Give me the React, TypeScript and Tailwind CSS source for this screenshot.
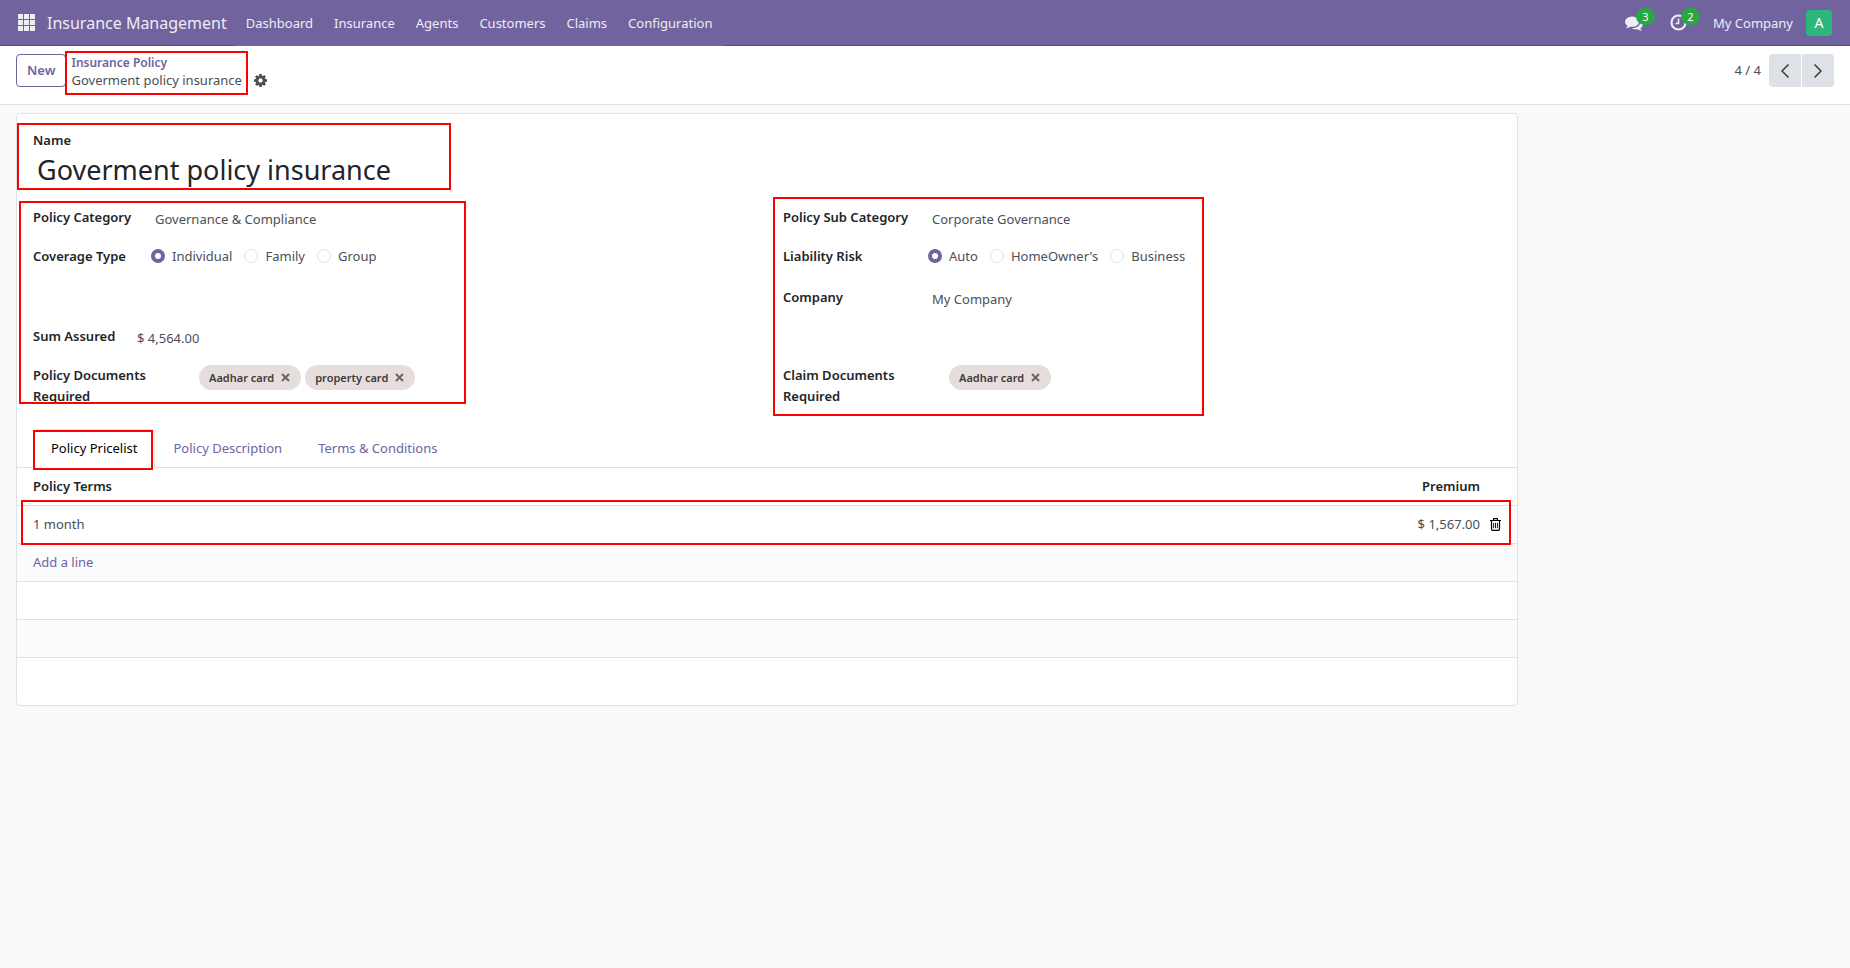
import React, { useState } from 'react';
import { clsx } from 'clsx';

const menuItems = ['Dashboard', 'Insurance', 'Agents', 'Customers', 'Claims', 'Configuration'];
const tabs = ['Policy Pricelist', 'Policy Description', 'Terms & Conditions'];

const labelClass = 'shrink-0 font-semibold leading-[21px] text-[#212529]';
const valueClass = 'h-[23px] min-w-0 flex-1 bg-transparent leading-[21px] outline-none';

function Highlight({ className }: { className: string }) {
  return <div aria-hidden="true" className={clsx('pointer-events-none absolute z-10 border-2 border-[#fe0000]', className)} />;
}

function AppsIcon() {
  return (
    <svg width="17" height="17" viewBox="0 0 17 17" fill="currentColor">
      {[0, 6, 12].map((y) => [0, 6, 12].map((x) => <rect key={`${x}-${y}`} x={x} y={y} width="5" height="5" />))}
    </svg>
  );
}

function ChatIcon() {
  return (
    <svg width="18" height="18" viewBox="0 0 1792 1792" fill="currentColor">
      <path d="M1408 768q0 139-94 257t-256.5 186.5-353.5 68.5q-86 0-176-16-124 88-278 128-36 9-86 16h-3q-11 0-20.5-8t-11.5-21q-1-3-1-6.5t.5-6.5 2-6l2.5-5 3.5-5.5 4-5 4.5-5 4-4.5q5-6 23-25t26-29.5 22.5-29 25-38.5 20.5-44q-124-72-195-177t-71-224q0-139 94-257t256.5-186.5 353.5-68.5 353.5 68.5 256.5 186.5 94 257zm384 256q0 120-71 224.5t-195 176.5q10 24 20.5 44t25 38.5 22.5 29 26 29.5 23 25q1 1 4 4.5t4.5 5 4 5 3.5 5.5l2.5 5 2 6 .5 6.5-1 6.5q-3 14-13 22t-22 7q-50-7-86-16-154-40-278-128-90 16-176 16-271 0-472-132 58 4 88 4 161 0 309-45t264-129q125-92 192-212t67-254q0-77-23-152 129 71 204 178t75 230z" />
    </svg>
  );
}

function ClockIcon() {
  return (
    <svg width="17" height="17" viewBox="0 0 17 17" fill="none" stroke="currentColor">
      <circle cx="8.5" cy="8.5" r="7" strokeWidth="2.2" />
      <path d="M8.5 4.5V9.5H5.5" strokeWidth="1.6" />
    </svg>
  );
}

function GearIcon() {
  return (
    <svg width="13" height="13" viewBox="128 128 1536 1536" fill="currentColor">
      <path d="M1152 896q0-106-75-181t-181-75-181 75-75 181 75 181 181 75 181-75 75-181zm512-109v222q0 12-8 23t-20 13l-185 28q-19 54-39 91 35 50 107 138 10 12 10 25t-9 23q-27 37-99 108t-94 71q-12 0-26-9l-138-108q-44 23-91 38-16 136-29 186-7 28-36 28h-222q-14 0-24.5-8.5t-11.5-21.5l-28-184q-49-16-90-37l-141 107q-10 9-25 9-14 0-25-11-126-114-165-168-7-10-7-23 0-12 8-23 15-21 51-66.5t54-70.5q-27-50-41-99l-183-27q-13-2-21-12.5t-8-23.5v-222q0-12 8-23t19-13l186-28q14-46 39-92-40-57-107-138-10-12-10-24 0-10 9-23 26-36 98.5-107.5t94.5-71.5q13 0 26 10l138 107q44-23 91-38 16-136 29-186 7-28 36-28h222q14 0 24.5 8.5t11.5 21.5l28 184q49 16 90 37l142-107q9-9 24-9 13 0 25 10 129 119 165 170 7 8 7 22 0 12-8 23-15 21-51 66.5t-54 70.5q26 50 41 98l183 28q13 2 21 12.5t8 23.5z" />
    </svg>
  );
}

function TrashIcon() {
  return (
    <svg width="11" height="13" viewBox="0 0 11 13" fill="none" stroke="currentColor">
      <path d="M0 2.5H11M3.5 2.5V1.2Q3.5 .6 4.1 .6H6.9Q7.5 .6 7.5 1.2V2.5M1.5 2.5V11Q1.5 12.3 2.6 12.3H8.4Q9.5 12.3 9.5 11V2.5" strokeWidth="1.2" />
      <path d="M3.6 4.8V10.2M5.5 4.8V10.2M7.4 4.8V10.2" strokeWidth="0.9" />
    </svg>
  );
}

function Counter({ children }: { children: React.ReactNode }) {
  return (
    <span className="absolute -top-1.5 left-[11px] flex h-[17px] w-[19px] items-center justify-center rounded-full bg-[#28a745] text-[11px] leading-none text-white">
      {children}
    </span>
  );
}

function Field({ label, id, labelWidth, value }: { label: string; id: string; labelWidth: string; value: string }) {
  return (
    <div className="flex h-[39px] items-start">
      <label htmlFor={id} className={clsx(labelClass, labelWidth)}>{label}</label>
      <input id={id} type="text" defaultValue={value} className={valueClass} />
    </div>
  );
}

function RadioField({ label, name, labelWidth, options }: { label: string; name: string; labelWidth: string; options: string[] }) {
  const [selected, setSelected] = useState(options[0]);

  return (
    <div role="radiogroup" aria-labelledby={`${name}-label`} className="flex h-[41px] items-start">
      <span id={`${name}-label`} className={clsx(labelClass, labelWidth)}>{label}</span>
      <div className="flex gap-3">
        {options.map((option) => (
          <label key={option} className="flex items-center gap-[7px] leading-5">
            <input
              type="radio"
              name={name}
              value={option}
              checked={selected === option}
              onChange={() => setSelected(option)}
              className="size-3.5 appearance-none rounded-full border border-[#dee2e6] bg-white checked:border-4 checked:border-[#71639e]"
            />
            {option}
          </label>
        ))}
      </div>
    </div>
  );
}

function TagField({ label, tags }: { label: string; tags: string[] }) {
  const [items, setItems] = useState(tags);

  return (
    <div className="flex items-start">
      <span className={clsx(labelClass, 'w-[166px] pr-6')}>{label}</span>
      <div className="flex gap-1">
        {items.map((tag) => (
          <span key={tag} className="flex h-[25px] items-center gap-[7px] rounded-full bg-[#e6dddd] pl-2.5 pr-[11px] text-[11px] font-semibold text-[#3f3b3b]">
            {tag}
            <button type="button" aria-label={`Remove ${tag}`} onClick={() => setItems(items.filter((item) => item !== tag))}>
              <svg width="9" height="9" viewBox="0 0 9 9" fill="none" stroke="#666" strokeWidth="2">
                <path d="M1 1L8 8M8 1L1 8" />
              </svg>
            </button>
          </span>
        ))}
      </div>
    </div>
  );
}

function Navbar() {
  return (
    <header className="flex h-[46px] items-center border-b border-[#5a4f7f] bg-[#71639e] px-[18px] text-[#eeecf4]">
      <button type="button" aria-label="Apps"><AppsIcon /></button>
      <a href="#" className="ml-3 mr-2 text-[16px] leading-6">Insurance Management</a>
      <nav className="-mb-px flex h-[46px] items-center gap-px bg-[#71639e] px-px">
        {menuItems.map((item) => (
          <a key={item} href="#" className="px-2.5 pt-px">{item}</a>
        ))}
      </nav>
      <div className="ml-auto flex items-center">
        <button type="button" aria-label="Messages" className="relative mr-[27px]">
          <ChatIcon />
          <Counter>3</Counter>
        </button>
        <button type="button" aria-label="Activities" className="relative mr-[26px]">
          <ClockIcon />
          <Counter>2</Counter>
        </button>
        <button type="button" className="pt-px">My Company</button>
        <button type="button" aria-label="User" className="ml-[13px] flex size-[26px] items-center justify-center rounded bg-[#2eb77d] text-[14px] text-white">
          A
        </button>
      </div>
    </header>
  );
}

function ControlPanel() {
  return (
    <div className="flex h-[59px] items-start justify-between border-b border-[#dee2e6] bg-white px-4 pt-2">
      <div className="flex">
        <button type="button" className="h-[33px] rounded border border-[#71639e] px-2.5 text-[13px] font-semibold text-[#71639e]">New</button>
        <div className="relative ml-[5px]">
          <a href="#" className="block text-[12px] font-semibold leading-[17px] text-[#71639e]">Insurance Policy</a>
          <div className="flex items-center gap-3 leading-[18px]">
            <span>Goverment policy insurance</span>
            <button type="button" aria-label="Actions"><GearIcon /></button>
          </div>
          <Highlight className="-left-1.5 -top-[3px] h-11 w-[183px]" />
        </div>
      </div>
      <div className="flex items-center gap-2">
        <span>4 / 4</span>
        <div className="flex gap-px text-[#343a40]">
          <button type="button" aria-label="Previous" className="flex h-[33px] w-8 items-center justify-center rounded-l bg-[#dee2e6]">
            <svg width="8" height="14" viewBox="0 0 8 14" fill="none" stroke="currentColor" strokeWidth="1.5"><path d="M7.5 .5L1 7L7.5 13.5" /></svg>
          </button>
          <button type="button" aria-label="Next" className="flex h-[33px] w-8 items-center justify-center rounded-r bg-[#dee2e6]">
            <svg width="8" height="14" viewBox="0 0 8 14" fill="none" stroke="currentColor" strokeWidth="1.5"><path d="M.5 .5L7 7L.5 13.5" /></svg>
          </button>
        </div>
      </div>
    </div>
  );
}

function PriceList() {
  return (
    <div className="relative">
      <table className="w-full border-separate border-spacing-0 [&_td]:border-b [&_td]:border-[#dee2e6] [&_th]:border-b [&_th]:border-[#dee2e6]">
        <thead>
          <tr className="h-[38px] text-[#212529]">
            <th className="pl-4 text-left font-semibold">Policy Terms</th>
            <th className="text-right font-semibold">Premium</th>
            <th className="w-[37px]" aria-label="Delete" />
          </tr>
        </thead>
        <tbody>
          <tr className="h-[38px]">
            <td className="pl-4">1 month</td>
            <td className="text-right">$ 1,567.00</td>
            <td>
              <button type="button" aria-label="Delete row" className="ml-2.5 flex text-black"><TrashIcon /></button>
            </td>
          </tr>
          <tr className="h-[38px] bg-[#fcfcfc]">
            <td colSpan={3} className="pl-4">
              <a href="#" className="text-[#71639e]">Add a line</a>
            </td>
          </tr>
          <tr className="h-[38px]"><td colSpan={3} /></tr>
          <tr className="h-[38px] bg-[#fcfcfc]"><td colSpan={3} /></tr>
        </tbody>
      </table>
      <Highlight className="left-1 right-1.5 top-8 h-[45px]" />
    </div>
  );
}

export default function App() {
  const [activeTab, setActiveTab] = useState(tabs[0]);

  return (
    <div className="min-h-screen bg-[#f8f9fa] font-['Noto_Sans',sans-serif] text-[13px] leading-[21px] text-[#495057]">
      <Navbar />
      <ControlPanel />

      <main className="px-4 pb-4 pt-2">
        <div className="max-w-[1502px] rounded border border-[#dee2e6] bg-white pb-[47px]">
          <div className="px-4 pt-4">
            {/* Title */}
            <div className="relative">
              <label htmlFor="name" className={clsx(labelClass, 'block')}>Name</label>
              <input
                id="name"
                type="text"
                defaultValue="Goverment policy insurance"
                className="block h-9 w-full bg-transparent pl-1 text-[27px] text-[#212529] outline-none"
              />
              <Highlight className="-left-4 -top-[7px] h-[67px] w-[434px]" />
            </div>

            <div className="mt-5 grid grid-cols-2 gap-8">
              <div className="relative">
                <Field label="Policy Category" id="category" labelWidth="w-[122px]" value="Governance & Compliance" />
                <RadioField label="Coverage Type" name="coverage" labelWidth="w-[118px]" options={['Individual', 'Family', 'Group']} />
                <div className="h-[39px]" />
                <Field label="Sum Assured" id="sum" labelWidth="w-[104px]" value="$ 4,564.00" />
                <TagField label="Policy Documents Required" tags={['Aadhar card', 'property card']} />
                <Highlight className="-left-3.5 -top-1.5 h-[203px] w-[447px]" />
              </div>
              <div className="relative">
                <Field label="Policy Sub Category" id="sub-category" labelWidth="w-[149px]" value="Corporate Governance" />
                <RadioField label="Liability Risk" name="liability" labelWidth="w-[145px]" options={['Auto', "HomeOwner's", 'Business']} />
                <Field label="Company" id="company" labelWidth="w-[149px]" value="My Company" />
                <div className="h-[39px]" />
                <TagField label="Claim Documents Required" tags={['Aadhar card']} />
                <Highlight className="-left-2.5 -top-2.5 h-[219px] w-[431px]" />
              </div>
            </div>
          </div>

          {/* Notebook */}
          <div role="tablist" className="mt-[22px] flex border-b border-[#dee2e6] px-4">
            {tabs.map((tab) => (
              <button
                key={tab}
                type="button"
                role="tab"
                aria-selected={activeTab === tab}
                onClick={() => setActiveTab(tab)}
                className={clsx(
                  'relative -mb-px h-[39px] rounded-t border px-[17px]',
                  activeTab === tab ? 'border-[#dee2e6] border-b-white bg-white text-black' : 'border-transparent text-[#71639e]',
                )}
              >
                {tab}
                {tab === tabs[0] && <Highlight className="-left-px top-0 h-10 w-[120px]" />}
              </button>
            ))}
          </div>
          <PriceList />
        </div>
      </main>
    </div>
  );
}
